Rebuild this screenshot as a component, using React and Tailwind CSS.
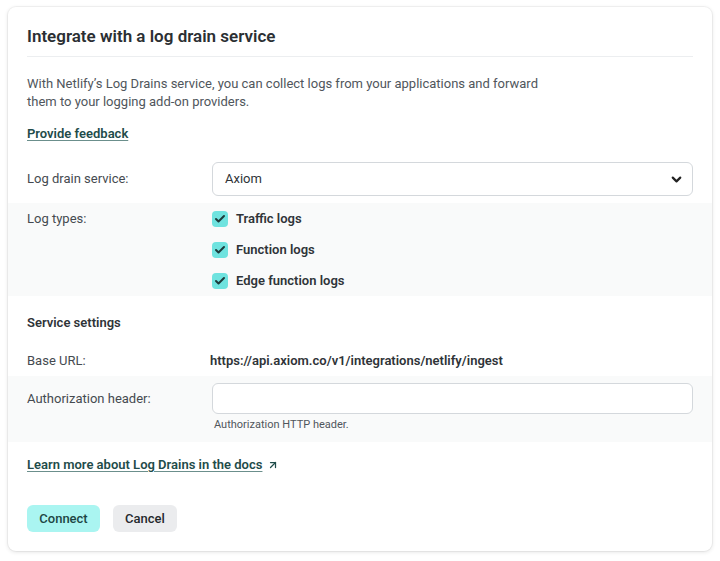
import { ChevronDown, Check, ArrowUpRight } from 'lucide-react'

function CheckItem({ label }) {
  return (
    <label className="flex h-[31px] items-center gap-2">
      <span className="flex h-4 w-4 items-center justify-center rounded-[4px] bg-[#6fe3df]">
        <Check size={12} strokeWidth={4} className="text-[#1d3b3b]" />
      </span>
      <span className="text-[13px] font-semibold text-[#2f3438]">{label}</span>
    </label>
  )
}

export default function App() {
  return (
    <div className="min-h-[561px] bg-white px-2 pt-[7px] pb-[10px]" style={{ fontFamily: 'Roboto, "Noto Sans", sans-serif' }}>
      <div className="rounded-lg bg-white pb-[19px] shadow-[0_1px_4px_rgba(0,0,0,0.12)] ring-1 ring-black/[0.04]">
        <div className="px-[19px] pt-[17px]">
          <h1 className="border-b border-[#eceef0] pb-2 text-[17px] leading-6 font-semibold text-[#2b2f33]">
            Integrate with a log drain service
          </h1>
          <p className="mt-[18px] max-w-[525px] text-[13px] leading-[18px] text-[#50565c]">
            With Netlify’s Log Drains service, you can collect logs from your applications and forward them to your logging add-on providers.
          </p>
          <a href="#" className="mt-[14px] block w-fit text-[13px] leading-[18px] font-semibold text-[#1f4c4a] underline decoration-[#6b8f8c] underline-offset-2">
            Provide feedback
          </a>
        </div>

        <div className="mt-3 grid grid-cols-[185px_1fr] items-center px-[19px] py-[7px]">
          <span className="text-[13px] text-[#454a50]">Log drain service:</span>
          <div className="flex h-[34px] items-center justify-between rounded-md border border-[#d4d8dc] bg-white pr-2 pl-3">
            <span className="text-[13px] text-[#2f3438]">Axiom</span>
            <ChevronDown size={15} strokeWidth={3.5} className="text-[#222]" />
          </div>
        </div>

        <div className="grid grid-cols-[185px_1fr] bg-[#f9fafa] px-[19px]">
          <span className="flex h-[31px] items-center text-[13px] text-[#454a50]">Log types:</span>
          <div className="flex flex-col">
            <CheckItem label="Traffic logs" />
            <CheckItem label="Function logs" />
            <CheckItem label="Edge function logs" />
          </div>
        </div>

        <div className="px-[19px]">
          <h2 className="mt-[18px] text-[13px] leading-[18px] font-semibold text-[#2f3438]">Service settings</h2>
        </div>

        <div className="mt-3 grid h-8 grid-cols-[183px_1fr] items-center px-[19px] pt-[2px]">
          <span className="text-[13px] text-[#454a50]">Base URL:</span>
          <span className="text-[13px] font-semibold text-[#2f3438]">https://api.axiom.co/v1/integrations/netlify/ingest</span>
        </div>

        <div className="grid grid-cols-[185px_1fr] bg-[#f9fafa] px-[19px] pt-[7px] pb-[9px]">
          <span className="flex h-[31px] items-center text-[13px] text-[#454a50]">Authorization header:</span>
          <div>
            <input className="block h-[31px] w-full rounded-md border border-[#d4d8dc] bg-white px-3 text-[13px] outline-none" />
            <div className="mt-[3px] pl-[2px] text-[11px] leading-4 text-[#50565c]">Authorization HTTP header.</div>
          </div>
        </div>

        <div className="px-[19px]">
          <a href="#" className="mt-[14px] flex w-fit items-center gap-[5px] text-[13px] leading-[18px] font-semibold text-[#1f4c4a]">
            <span className="underline decoration-[#6b8f8c] underline-offset-2">Learn more about Log Drains in the docs</span>
            <ArrowUpRight size={12} strokeWidth={2.5} />
          </a>

          <div className="mt-[31px] flex gap-[13px]">
            <button className="h-[27px] w-[73px] rounded-md bg-[#aaf5f1] text-[13px] font-medium text-[#1d4644]">Connect</button>
            <button className="h-[27px] w-[64px] rounded-md bg-[#ebecee] text-[13px] font-medium text-[#25292d]">Cancel</button>
          </div>
        </div>
      </div>
    </div>
  )
}
